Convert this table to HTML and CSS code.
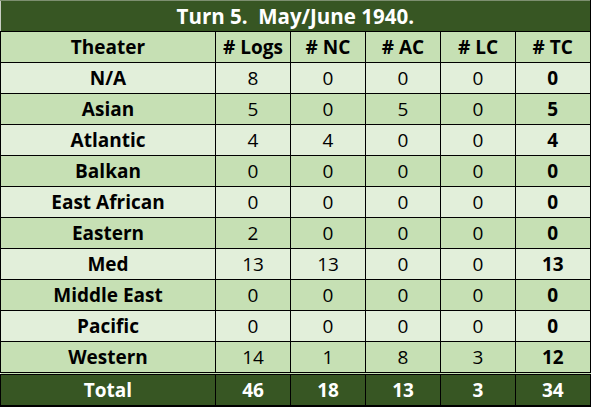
FILE: index.html
```html
<!DOCTYPE html>
<html lang="en">
<head>
    <meta charset="UTF-8">
    <meta name="viewport" content="width=device-width, initial-scale=1.0">
    <title>Turn 5 Logs</title>
    <link rel="stylesheet" href="styles.css">
</head>
<body>
    <table class="turn-table">
        <colgroup>
            <col class="col-theater">
            <col class="col-num">
            <col class="col-num">
            <col class="col-num">
            <col class="col-num">
            <col class="col-num">
        </colgroup>
        <!-- Title -->
        <tr class="title-row">
            <th colspan="6">Turn 5.&nbsp; May/June 1940.</th>
        </tr>
        <!-- Column headers -->
        <tr class="head-row">
            <th>Theater</th>
            <th># Logs</th>
            <th># NC</th>
            <th># AC</th>
            <th># LC</th>
            <th># TC</th>
        </tr>
        <tr class="row-light">
            <td class="name">N/A</td><td>8</td><td>0</td><td>0</td><td>0</td><td class="tc">0</td>
        </tr>
        <tr class="row-dark">
            <td class="name">Asian</td><td>5</td><td>0</td><td>5</td><td>0</td><td class="tc">5</td>
        </tr>
        <tr class="row-light">
            <td class="name">Atlantic</td><td>4</td><td>4</td><td>0</td><td>0</td><td class="tc">4</td>
        </tr>
        <tr class="row-dark">
            <td class="name">Balkan</td><td>0</td><td>0</td><td>0</td><td>0</td><td class="tc">0</td>
        </tr>
        <tr class="row-light">
            <td class="name">East African</td><td>0</td><td>0</td><td>0</td><td>0</td><td class="tc">0</td>
        </tr>
        <tr class="row-dark">
            <td class="name">Eastern</td><td>2</td><td>0</td><td>0</td><td>0</td><td class="tc">0</td>
        </tr>
        <tr class="row-light">
            <td class="name">Med</td><td>13</td><td>13</td><td>0</td><td>0</td><td class="tc">13</td>
        </tr>
        <tr class="row-dark">
            <td class="name">Middle East</td><td>0</td><td>0</td><td>0</td><td>0</td><td class="tc">0</td>
        </tr>
        <tr class="row-light">
            <td class="name">Pacific</td><td>0</td><td>0</td><td>0</td><td>0</td><td class="tc">0</td>
        </tr>
        <tr class="row-dark last-row">
            <td class="name">Western</td><td>14</td><td>1</td><td>8</td><td>3</td><td class="tc">12</td>
        </tr>
        <!-- Totals -->
        <tr class="total-row">
            <td>Total</td><td>46</td><td>18</td><td>13</td><td>3</td><td>34</td>
        </tr>
    </table>
</body>
</html>
```

FILE: styles.css
```css
/* Spreadsheet style table */
body {
    margin: 0;
    background-color: #ffffff;
    font-family: "Open Sans", Lato, sans-serif;
}

.turn-table {
    border-collapse: collapse;
    width: 591px;
    table-layout: fixed;
    border-top: 1px solid #7d8f70;
    border-left: 1px solid #c9cec4;
    border-right: 2px solid #000;
    border-bottom: 2px solid #000;
    font-size: 19px;
    color: #000;
}

.col-theater {
    width: 215px;
}

.col-num {
    width: 75px;
}

th,
td {
    height: 30px;
    padding: 0;
    text-align: center;
    vertical-align: middle;
    border: 1px solid #000;
    line-height: 20px;
}

.title-row th {
    background-color: #375623;
    color: #fff;
    font-size: 20.5px;
    font-weight: bold;
    border-left: none;
    border-right: none;
    border-top: none;
}

.head-row th {
    background-color: #c6e0b4;
    font-weight: bold;
}

.row-light td {
    background-color: #e2efda;
}

.row-dark td {
    background-color: #c6e0b4;
}

.name,
.tc {
    font-weight: bold;
}

.last-row td {
    border-bottom: 3px double #000;
}

.total-row td {
    background-color: #375623;
    color: #fff;
    font-weight: bold;
}
```
